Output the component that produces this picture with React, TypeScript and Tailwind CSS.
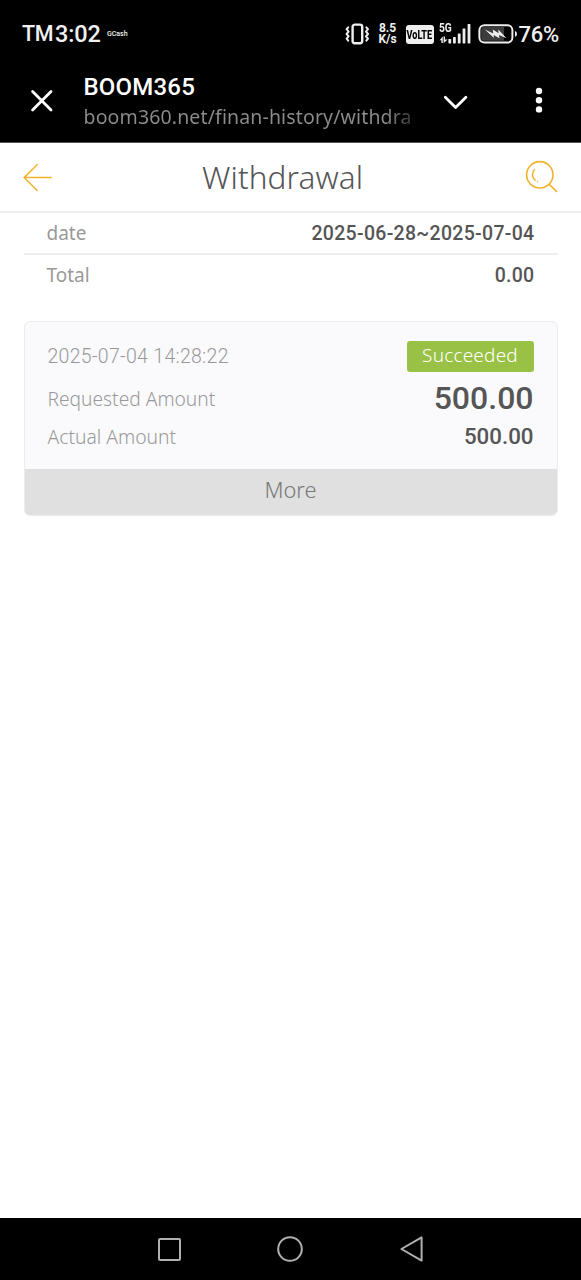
import React from 'react';

const VibrateIcon = () => (
  <svg width="25" height="22" viewBox="0 0 25 22" fill="none" stroke="#eee" strokeLinecap="round" strokeLinejoin="round">
    <rect x="7.6" y="1.6" width="9.6" height="18.6" rx="2.2" strokeWidth="2.4" />
    <path d="M3.2 4.3L1.6 6.2L3.6 8.6L1.6 11L3.6 13.4L1.6 15.6L3.2 17.6" strokeWidth="2" />
    <path d="M21.4 4.3L23 6.2L21 8.6L23 11L21 13.4L23 15.6L21.4 17.6" strokeWidth="2" />
  </svg>
);

const SignalIcon = () => (
  <svg width="33" height="22" viewBox="0 0 33 22" fill="#eee">
    <path d="M0.6 17.2L3.8 13.4V20H2.4V17.2ZM4.6 13.4H6V16.4H8.6L4.6 20.2Z" />
    <rect x="9.4" y="16" width="2.8" height="4.4" rx="0.6" />
    <rect x="14" y="14" width="2.8" height="6.4" rx="0.6" />
    <rect x="18.8" y="10.5" width="2.8" height="9.9" rx="0.6" />
    <rect x="23.6" y="5.5" width="2.8" height="14.9" rx="0.6" />
    <rect x="28.6" y="1" width="2.8" height="19.4" rx="0.6" />
  </svg>
);

const BatteryIcon = () => (
  <svg width="40" height="20" viewBox="0 0 40 20" fill="none">
    <rect x="1.4" y="1.2" width="33" height="17.4" rx="5" fill="#000" stroke="#eee" strokeWidth="2" />
    <path d="M5.4 3H26V16.8H5.4Q3.2 16.8 3.2 14V6Q3.2 3 5.4 3Z" fill="#3c3c3c" />
    <path d="M6.8 5.4L15.2 9.4L14.8 5.4L20.6 9.2L20.2 5.4L28.6 14.2L21 11L21.4 14.2L15.6 11L16 14Z" fill="#eee" />
    <path d="M37 7Q39 7.4 39 9.9Q39 12.4 37 12.8Z" fill="#eee" />
  </svg>
);

const StatusBar: React.FC = () => (
  <div className="flex h-[68px] items-center bg-black pl-[22px] pr-[22px] text-[#f0f0f0]">
    <span className="w-[33px] whitespace-nowrap text-[21.5px] font-medium leading-none tracking-[-0.3px]">TM</span>
    <span className="w-[46px] whitespace-nowrap pt-px text-[23.5px] font-medium leading-none tracking-[-0.1px]">3:02</span>
    <span className="ml-[6px] text-[7px] font-medium leading-none">GCash</span>
    <div className="ml-auto flex items-center">
      <VibrateIcon />
      <div className="ml-[7px] flex w-[22px] flex-col text-center text-[12px] font-bold leading-[11.5px]">
        <span>8.5</span>
        <span>K/s</span>
      </div>
      <div className="ml-[7px] flex h-[19px] w-[28px] items-center justify-center rounded-[3px] bg-[#eee]">
        <span className="scale-x-70 text-[13px] font-extrabold leading-none text-black">VoLTE</span>
      </div>
      <div className="relative ml-[5px]">
        <span className="absolute -top-px left-0 origin-left scale-x-85 text-[12px] font-bold leading-none">5G</span>
        <SignalIcon />
      </div>
      <div className="ml-[6px]"><BatteryIcon /></div>
      <span className="ml-px w-[40.5px] whitespace-nowrap pt-[2px] text-[22px] font-medium leading-none tracking-[-0.2px]">76%</span>
    </div>
  </div>
);

const BrowserBar: React.FC = () => (
  <div className="flex h-[75px] border-b border-[#555] bg-black text-white">
    <svg className="ml-[30px] mt-[21px] shrink-0" width="24" height="24" viewBox="0 0 24 24" fill="none" stroke="#fff" strokeWidth="2.8" strokeLinecap="round">
      <path d="M2.6 2.6L21 21M21 2.6L2.6 21" />
    </svg>
    <div className="ml-[29.5px] mt-[5px] w-[329px] shrink-0">
      <div className="text-[24px] font-medium leading-[29px] tracking-[0.2px]">BOOM365</div>
      <div className="whitespace-nowrap bg-linear-to-r from-[#8c8c8c] from-92% to-[#333] bg-clip-text font-[Noto_Sans,sans-serif] text-[19.5px] leading-[29px] tracking-[0.14px] text-transparent">
        boom360.net/finan-history/withdra
      </div>
    </div>
    <svg className="ml-[30.5px] mt-[26px] shrink-0" width="26" height="18" viewBox="0 0 26 18" fill="none" stroke="#fff" strokeWidth="2.8" strokeLinecap="round" strokeLinejoin="round">
      <path d="M2.3 3.2L12.6 13.4L22.9 3.2" />
    </svg>
    <svg className="ml-[65px] mt-[19px] shrink-0" width="10" height="28" viewBox="0 0 10 28" fill="#fff">
      <circle cx="5" cy="4" r="3.2" />
      <circle cx="5" cy="13.2" r="3.2" />
      <circle cx="5" cy="22.4" r="3.2" />
    </svg>
  </div>
);

const PageHeader: React.FC = () => (
  <header className="flex h-[69.5px] items-center border-b-2 border-[#eee] bg-white px-[23px]">
    <svg className="mt-[2px]" width="30" height="30" viewBox="0 0 30 30" fill="none" stroke="#f2b22d" strokeWidth="1.5">
      <path d="M14.6 1.2L1.2 14.6L14.6 28M1.2 14.6H28.6" />
    </svg>
    <h1 className="ml-[149px] font-[Noto_Sans,sans-serif] text-[31.5px] font-light tracking-[0.1px] text-[#555]">Withdrawal</h1>
    <svg className="ml-auto" width="34" height="34" viewBox="0 0 34 34" fill="none" stroke="#f2b22d" strokeWidth="1.6">
      <circle cx="15.8" cy="14.8" r="13.2" />
      <path d="M25 24.1L33 31.8" />
      <path d="M10.8 9.4Q8.4 11.6 8.4 14.8Q8.6 18.4 11.6 20.6" strokeWidth="1.5" />
      <path d="M13 21.3L14 21.8" />
    </svg>
  </header>
);

interface SummaryRowProps {
  label: string;
  value: string;
}

const SummaryRow: React.FC<SummaryRowProps> = ({ label, value }) => (
  <div className="flex h-[42px] items-center justify-between border-b-2 border-[#eee] pl-[23px] pr-[23px] pt-[2px] last:border-transparent">
    <span className="font-[Noto_Sans,sans-serif] text-[19px] text-[#999]">{label}</span>
    <span className="text-[19.5px] font-medium tracking-[0.3px] text-[#555]">{value}</span>
  </div>
);

const App: React.FC = () => (
  <div className="flex h-[1280px] w-[581px] flex-col overflow-hidden bg-white font-[Roboto,sans-serif]">
    <StatusBar />
    <BrowserBar />
    <PageHeader />
    <main className="grow px-[23.5px]">
      <section>
        <SummaryRow label="date" value="2025-06-28~2025-07-04" />
        <SummaryRow label="Total" value="0.00" />
      </section>

      <section className="mt-[24px] overflow-hidden rounded-md border border-[#ebecee] bg-[#fafafc]">
        <div className="h-[147px] px-[23px] pt-[19px] text-[#999]">
          <div className="flex h-[31px] items-center justify-between">
            <span className="pt-px text-[19.5px] font-light tracking-[0.3px]">2025-07-04 14:28:22</span>
            <span className="flex h-[31px] w-[127px] items-center justify-center rounded-[3px] bg-[#98c145] pb-[2px] font-[Noto_Sans,sans-serif] text-[19px] font-light tracking-[0.2px] text-white">Succeeded</span>
          </div>
          <div className="flex h-[54px] items-center justify-between">
            <span className="pt-px font-[Noto_Sans,sans-serif] text-[19.2px] font-light">Requested Amount</span>
            <span className="pb-[2px] text-[32px] font-medium text-[#555]">500.00</span>
          </div>
          <div className="flex h-[23px] items-center justify-between">
            <span className="font-[Noto_Sans,sans-serif] text-[19.3px] font-light">Actual Amount</span>
            <span className="text-[22.3px] font-medium text-[#555]">500.00</span>
          </div>
        </div>
        <button className="flex h-[46px] w-full items-center justify-center bg-[#e0e0e0] pb-[2px] font-[Noto_Sans,sans-serif] text-[21.8px] font-light text-[#777]">More</button>
      </section>
    </main>
    <nav className="flex h-[62px] items-center bg-black">
      <svg className="ml-[157px]" width="25" height="25" viewBox="0 0 25 25" fill="none" stroke="#b0b0b0" strokeWidth="2">
        <rect x="2" y="2" width="21" height="21" rx="1" />
      </svg>
      <svg className="ml-[94px]" width="28" height="28" viewBox="0 0 28 28" fill="none" stroke="#b0b0b0" strokeWidth="2">
        <circle cx="14" cy="14" r="11.8" />
      </svg>
      <svg className="ml-[95px]" width="25" height="28" viewBox="0 0 25 28" fill="none" stroke="#b0b0b0" strokeWidth="2" strokeLinejoin="round">
        <path d="M22.6 2.4V25.6L2.4 14Z" />
      </svg>
    </nav>
  </div>
);

export default App;
